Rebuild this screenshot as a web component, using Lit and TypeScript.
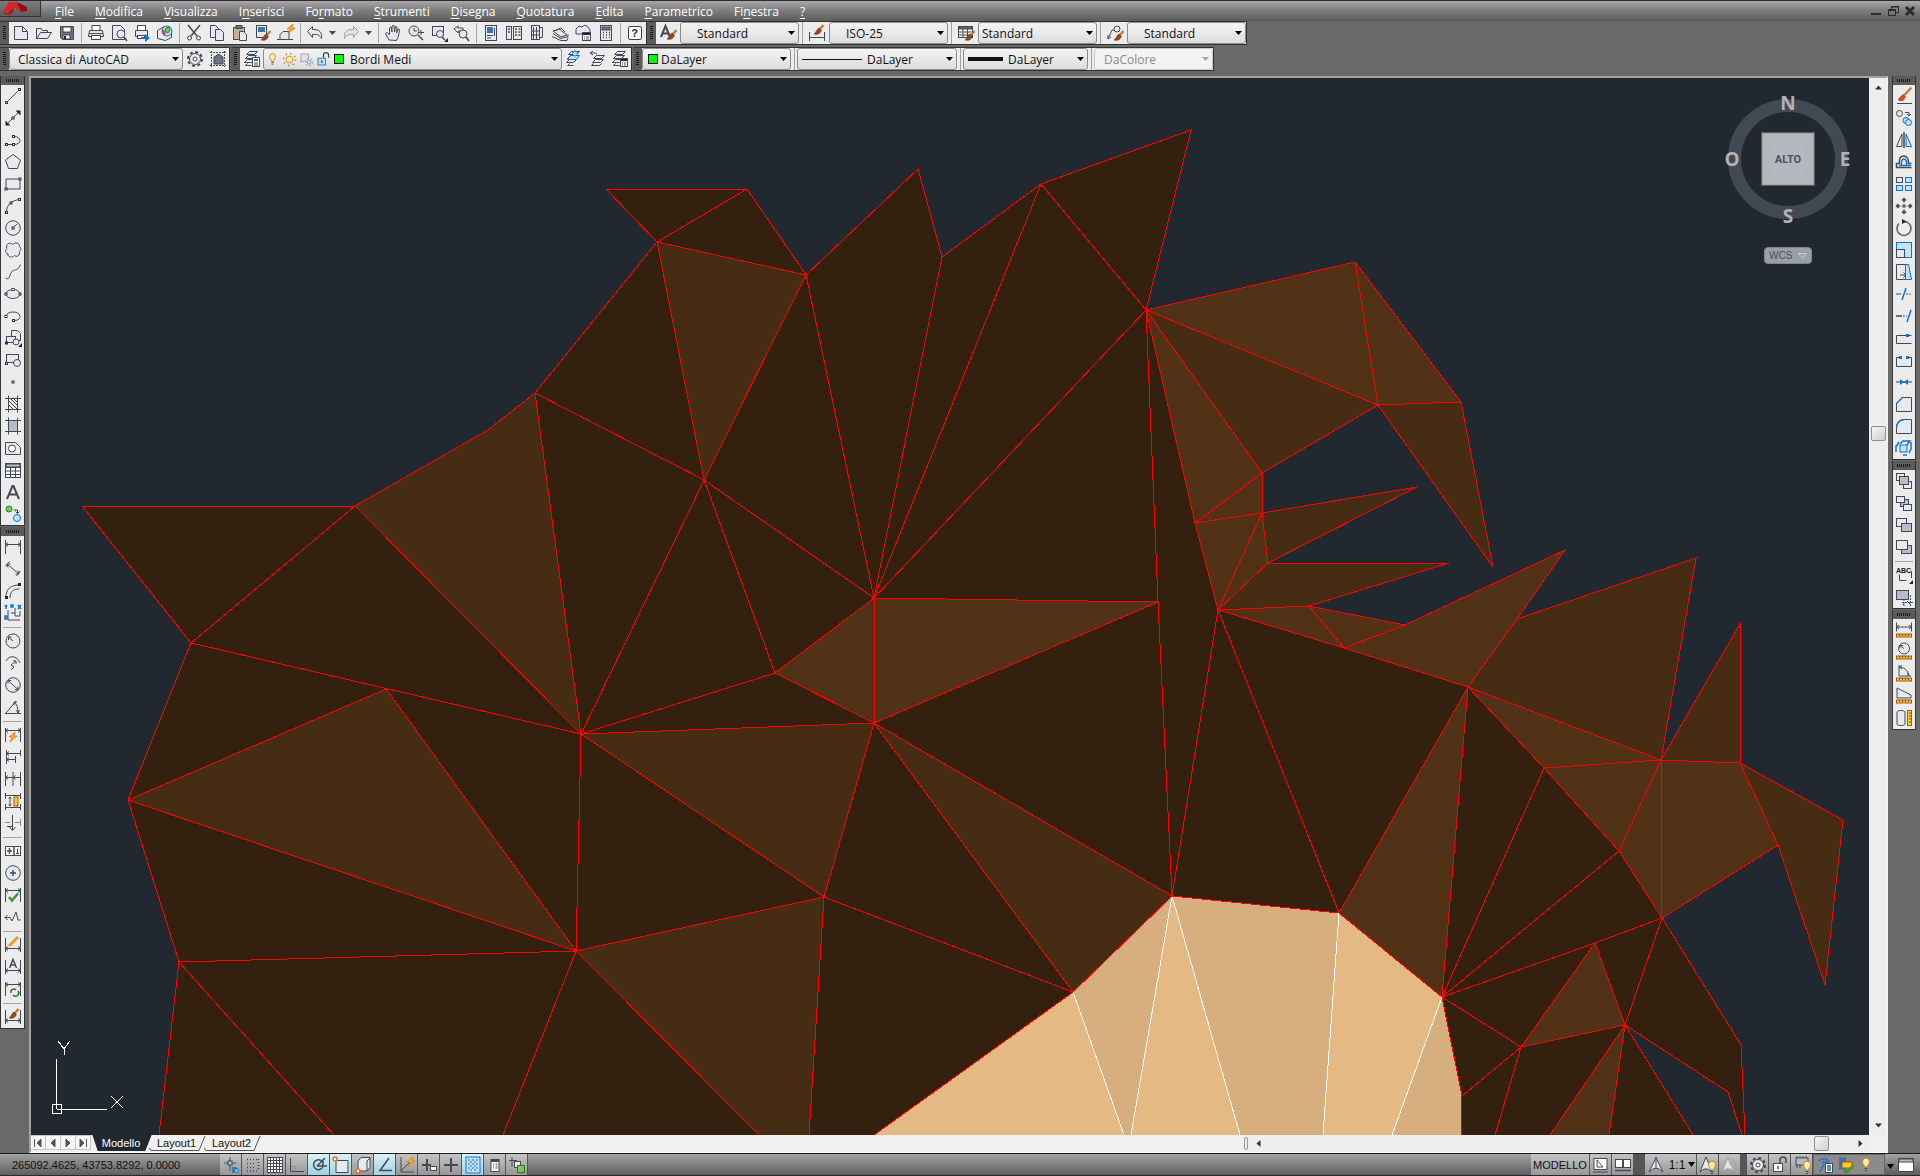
import { LitElement, html, css } from "lit";
import { customElement, property } from "lit/decorators.js";
import { unsafeSVG } from "lit/directives/unsafe-svg.js";

/* ---------- icon drawing helpers (20 x 20 grid) ---------- */
const p = (d: string, c = "k") => `<path class="${c}" d="${d}"/>`;
const r = (x: number, y: number, w: number, h: number, c = "f") =>
  `<rect class="${c}" x="${x}" y="${y}" width="${w}" height="${h}"/>`;
const o = (x: number, y: number, rad: number, c = "f") => `<circle class="${c}" cx="${x}" cy="${y}" r="${rad}"/>`;
const node = (x: number, y: number) => r(x - 1, y - 1, 2, 2, "n");
const ruler = r(2.5, 14, 15, 3, "y") + p("M5.5 14v2M8.5 14v2M11.5 14v2M14.5 14v2", "thin");
const dim = p("M2.5 3v14M17.5 3v14M2.5 13.5h15M5 11.5l-2.5 2 2.5 2M15 11.5l2.5 2-2.5 2");
const dimTop = p("M2.5 3v14M17.5 3v14M2.5 5.5h15M5 3.5l-2.5 2 2.5 2M15 3.5l2.5 2-2.5 2");
const brush = (x: number, y: number) =>
  `<g transform="translate(${x} ${y})">` + p("M9.5 0L5.5 4.5", "wood") + p("M5 3L7.5 5.5C6 9 3 10 0 9C2 8 2 5 5 3Z", "bristle") + "</g>";
const sheets = p("M7.5 2.5h8l-3 3h-8zM6.500 6.5h8l-3 3h-8zM5.5 10.5h7l-3 3h-7z".replace("6.500", "6.5"), "f") + p("M5.5 14.5l-2 2h6", "k");
const bolt = (x: number, y: number) => `<path class="bolt" transform="translate(${x} ${y})" d="M6 0L0 5h3l-2 5 7-6H5z"/>`;
const bulb = (x: number, y: number) =>
  `<g transform="translate(${x} ${y})">` + p("M2.5 9C2.5 7 .5 6 .5 3.5a3.5 3.5 0 0 1 7 0C7.500 6 5.5 7 5.5 9z".replace("7.500", "7.5"), "bulb") + p("M2.5 10.5h3M3 12.5h2") + "</g>";
const corner = p("M19 19v-4l-4 4z", "kf");

const ICONS: Record<string, string> = {
  new: p("M3.5 3.5h8l5 5v8h-13zM11.5 3.5v5h5", "f"),
  open: p("M2.5 15.5v-10h5l1 2h5v2", "f") + p("M2.5 15.5l4-6h11l-4 6z", "f"),
  save: p("M3.5 3.5h13v13h-11l-2-2z", "slate") + r(6, 4, 8, 5, "w") + r(6, 12, 7, 4, "w") + r(7, 13, 2, 3, "kf"),
  print: r(6, 2.5, 8, 5, "w") + p("M3.5 7.5h13l1 6h-15z", "f") + r(5.5, 12.5, 9, 4, "w") + p("M3 10.5h14"),
  preview: p("M3.5 2.5h8l4 4v10h-12z", "f") + o(12, 11, 4) + p("M15 14l3 4", "k2"),
  publish: r(5.5, 2.5, 8, 5, "w") + p("M3.5 7.5h12v6h-12z", "f") + r(5.5, 12.5, 7, 3, "w") + p("M9 14h4v-3l5 4-5 4v-3H9z", "bf"),
  globe: p("M2.5 7.5l7-4 7 3v8l-6 3-8-2z", "f") + o(12, 8, 5, "bl") + p("M11 5l3-1 1 3-2 3-3-2z", "gf") + p("M8 6l3 4-2 3-2-4z", "rf"),
  cut: p("M4 2l9 11M16 2L7 13", "k2") + o(5.5, 15, 2, "k") + o(14.5, 15, 2, "k"),
  copy: p("M3.5 2.5h5l3 3v9h-8z", "f") + p("M8.5 6.5h5l3 3v8h-8z", "f"),
  paste: r(3.5, 4.5, 11, 12, "tan") + r(6, 2.5, 6, 3, "slate") + p("M9.5 8.5h4l3 3v6h-7z", "f"),
  match: r(3.5, 2.5, 10, 12) + r(5, 4, 7, 5, "bf2") + brush(8, 8),
  block: p("M4 16.5v-5l3-3h6v8zM1 16.5h4M13 16.5h4", "f") + bolt(11, 1),
  undo: p("M2.5 8.5l5-5v3c7-.5 10 3 9 9-1.5-3-4-4.5-9-4v3z", "f"),
  redo: p("M17.5 8.5l-5-5v3c-7-.5-10 3-9 9 1.5-3 4-4.5 9-4v3z", "g"),
  pan: p("M6 17L2.5 10.5l1.5-1 2.5 2V5l1.5-1 1 5V3l2-.5.5 6.5 1-5.5 1.5.5-.5 6 1.5-4 1.5.5c-.5 4-1 7-3 11z", "f"),
  zoomrt: o(8, 8, 5) + p("M8 5v3h3") + p("M12 12l5 5", "k2") + p("M15 7v5M12 9.500h6".replace("9.500", "9.5")),
  zoomwin: r(3.5, 3.5, 11, 9) + o(11, 11, 3.5) + p("M13 14l3 3", "k2") + corner,
  zoomprev: p("M2 6l4-3v2h5v3h-5v2z", "f") + o(11, 11, 4) + p("M14 14l3 4", "k2"),
  props: r(4.5, 2.5, 11, 15) + r(6, 4, 6, 6, "bf2") + p("M6 12.5h6M6 15h4M13.5 5v8"),
  center: r(2.5, 3.5, 5, 13) + r(9.5, 3.5, 8, 13) + p("M11 6h2M14.5 6h2M11 9h2M14.5 9h2M11 12h2M14.5 12h2M4 6h2M4 9h2", "k2"),
  palettes: r(4.5, 2.5, 8, 14) + p("M12.5 4.5h3v10h-3M6.5 4v12M9.5 4v12M5 8h7M5 12h7"),
  sheetset: p("M2 13.5l9 4h6l1-3", "f") + p("M3 10.5l8 5 7-2v-2M3 8l8 6 6-2-8-6zM5 8l6-3 4 4", "f"),
  markup: p("M3 6l3-3 3 1 3-2 3 2 2 3v4h-14z", "f") + r(9.5, 9.5, 8, 8, "w") + r(10, 10, 7, 2, "kf") + p("M11 14h1M13 14h3M11 16h1M13 16h3"),
  calc: r(4.5, 2.5, 11, 15) + r(6, 4, 8, 3, "slate") + p("M7 9.5h1M10 9.5h1M13 9.5h1M7 12h1M10 12h1M13 12h1M7 14.5h1M10 14.5h1M13 14.5h1", "k2"),
  textstyle: p("M3 14L7.5 3 12 14M4.5 10.5h6", "k3") + brush(9, 7),
  dimstyle: p("M2.5 9v9M17.5 9v9M2.5 14.5h15") + brush(7, 2),
  tablestyle: r(2.5, 3.5, 14, 11, "w") + r(3, 4, 13, 2, "slate") + p("M2.5 9h14M2.5 12h14M7 6v8M11.5 6v8") + brush(9, 8),
  leader: p("M3 16L7 7h3M3 16v-4M3 16l3-2") + o(12, 6, 3) + brush(9, 8),
  gear: `<circle class="kd" cx="10" cy="10" r="7"/>` + o(10, 10, 5.5) + o(10, 10, 2, "w"),
  wsave: p("M3.5 2v16M16.5 2v16M2 3.5h16M2 16.5h16", "dash") + p("M6 15V8l5-3 4 3v7z", "slate"),
  layerprops: sheets + r(10.5, 8.5, 7, 9, "w") + r(12, 10, 4, 2, "bf") + p("M12 14h4M12 16h4"),
  bulb: bulb(6, 3),
  sun: `<circle class="ray" cx="10" cy="10" r="7"/>` + o(10, 10, 4, "bulb"),
  frozen: r(3.5, 3.5, 9, 9, "g") + `<circle class="gd" cx="13" cy="13" r="4"/>` + o(13, 13, 2, "g"),
  unlock: r(3.5, 8.5, 9, 8, "bl") + p("M10 8V5a3 3 0 0 1 6 0v3M8 11v3", "k2"),
  unlockw: r(3.5, 8.5, 9, 8, "w") + p("M10 8V5a3 3 0 0 1 6 0v3M8 11v3", "k2"),
  layercur: sheets + p("M6.5 6.5h9l-3 4h-9z", "bl") + o(11, 4.5, 2.5, "bl"),
  layerprev: p("M9.5 6.5h8l-3 3h-8zM8.5 10.5h8l-3 3h-8zM6.5 14.5l-2 2h8l2-2", "f") + p("M10 5C8 3.500 6 4 4 4M6 2L3 4l3 2".replace("3.500", "3.5")),
  layerstate: sheets + r(10.5, 9.5, 7, 8, "w") + r(11, 10, 6, 2, "kf") + p("M12 14h1M14 14h2M12 16h1M14 16h2"),

  line: p("M3.5 16.5l13-13") + node(3.5, 16.5) + node(16.5, 3.5),
  xline: p("M4 16L16 4") + p("M2.5 17.5v-5l5 5zM17.5 2.5v5l-5-5z", "kf") + node(10, 10),
  pline: p("M3 14.5h8M11 14.5c8 0 8-8 0-8") + node(3.5, 14.5) + node(10.5, 14.5) + node(10.5, 6.5),
  polygon: p("M10 2.5L17.5 8l-3 8.5h-9L2.5 8z", "f"),
  rect: r(3, 5, 14, 10) + node(3, 15) + node(17, 5),
  arc: p("M3.5 16.5c0-8 5-12 13-13") + node(3.5, 16.5) + node(8, 7) + node(16.5, 3.5),
  circle: o(10, 10, 7.3) + p("M10 10l4-4") + node(10, 10),
  cloud: p("M10 4.5c2-3 7-1.5 6.5 2 2 2 1.5 4 0 5 1 4-3 6-5 4-2 2.5-7 2-6.5-1.5-3-1-3-4-1-5.5C2 4 7 1.5 10 4.5z", "f"),
  spline: p("M2.5 16c4 3 4-3 6-6s6 0 9-7.5"),
  ellipse: `<ellipse class="f" cx="10" cy="10" rx="7" ry="4.5"/>` + node(3, 10) + node(17, 10) + node(10, 5.5),
  earc: p("M3 10.5c0-6 14-6 14 0 0 3-3 4-6 4") + node(3, 10.5) + node(10.5, 14.5),
  insert: p("M8.5 2.5h6l3 3v7h-9z", "f") + r(3.5, 8.5, 9, 6) + o(13, 14, 3) + corner + node(3.5, 15),
  makeblock: r(3.5, 4.5, 12, 8) + o(14, 13, 3.5) + node(3.5, 13.5),
  point: node(10, 10),
  hatch: p("M5.5 1.5v17M14.5 1.5v17M2 4.5h16M2 15.5h16") + p("M6 7l8 8M6 11l4 4M8 5l6 6M11 5l3 3"),
  gradient: r(5.5, 4.5, 9, 11, "slatel") + p("M5.5 1.5v17M14.5 1.5v17M2 4.5h16M2 15.5h16"),
  region: p("M2.5 4.5h10l5 5v7h-15z", "f") + o(9, 10.5, 3.5, "w"),
  table: r(2.5, 3.5, 15, 14, "w") + r(3, 4, 14, 3, "slatel") + p("M2.5 7.5h15M2.5 11h15M2.5 14.5h15M7.5 7v10M12.5 7v10"),
  mtext: p("M4 17L9.500 4h1L16 17M6 12.5h8".replace("9.500", "9.5"), "k3"),
  addsel: o(6, 5, 3, "gf") + o(14, 14, 3.5, "bl") + p("M10.5 6h4v3M12.5 7.5l2 2 2-2"),

  dlinear: p("M2.5 3v14M17.5 3v14M2.5 7.5h15M5 5.5l-2.5 2 2.5 2M15 5.5l2.5 2-2.5 2"),
  daligned: p("M4 5l12 10M2.5 7.5l4-5M13.5 17l4-5M4 5l1 3.5M4 5h3.5M16 15l-1-3.5M16 15h-3.5"),
  darc: p("M3 16c0-8 5-12 13-12M7 17c0-6 3-9 9.5-9") + r(2, 15, 3, 3, "kf") + r(15, 2, 3, 3, "kf"),
  dord: p("M5 7v10h12M8 10h4v3h5v-5M12 5v5") + p("M2 2l1 2 1-2M3 4v2M8 2h2v2h-2zM15 2l3 4M18 2l-3 4M2 13h2v3h-2z", "b"),
  dradius: o(10, 10, 7) + p("M10 10L5.5 6M5.5 6v3M5.5 6h3"),
  djog: p("M3 8c3-6 11-6 14 2M8 17l3-3-3-2 5-4M13 8v3M13 8h-3"),
  ddia: o(10, 10, 7.3) + p("M5 5.5l10 9M5 5.5v3M5 5.5h3M15 14.5v-3M15 14.5h-3"),
  dang: p("M2 16.5h16M3 16L13 4M11 5c3 2 4 6 4 11M11 5v3M11 5h3M15 16l-1.5-3M15 16l1.5-3"),
  dquick: dimTop + bolt(6, 7),
  dbase: p("M3.5 3v14M17.5 3v6M3.5 6.5h14M12.5 9v7M3.5 12.5h9M6 4.5l-2.5 2 2.5 2M6 10.5l-2.5 2 2.5 2"),
  dcont: p("M2.5 3v14M10 3v14M17.5 3v14M2.5 8.5h15M5 6.5l-2.5 2 2.5 2M12.5 6.5L10 8.5l2.5 2"),
  dspace: p("M2.5 2v6M17.5 2v6M2.5 4.5h15M2.5 13v6M17.5 13v6M2.5 16.5h15M7 6v9M5.5 7.5L7 6l1.5 1.5M5.5 13.5L7 15l1.5-1.5") + r(11, 6, 4, 9, "y"),
  dbreak: p("M2 9.5h5M12 9.5h5M17.5 6v7", "gk") + p("M9.5 2v15M6.5 14l3 3.5 3-3.5M4 13.5h5"),
  tol: r(2.5, 5.5, 15, 9, "w") + p("M11 6v9M4 10h5M6.5 7v6", "k2") + p("M14.5 7.5v5M13 12.5h3"),
  cmark: o(10, 10, 7.3) + p("M10 7v6M7 10h6", "k2"),
  dinsp: dimTop + p("M6 12l3 3.5 6-7", "gr"),
  djogl: p("M2 10.5h5l2 3.5 4-9 2 8h3M4.5 8L2 10.5 4.5 13"),
  dedit: dim + p("M6 11L15 2", "pencil"),
  dtedit: dim + p("M6.5 11L10 2.5 13.5 11M8 8h4", "k2"),
  dupdate: dimTop + p("M8 14a3 3 0 0 1 5-3M15 12a3 3 0 0 1-5 4", "gr1"),
  dstyle: dim + brush(6, 2),

  erase: p("M3 17.5h15") + p("M17.5 1.5L9 10.5", "wood") + p("M9 8l3 3-3 4H5l-1-2z", "rf"),
  mcopy: o(5.5, 5.5, 3) + o(12, 12.5, 3, "bl") + o(14.5, 14.5, 3, "bl") + p("M11 4.5h4v3M13 6l2 2 2-2"),
  mirror: p("M8 4v12.5H2.5z", "f") + p("M12 4v12.5h5.5z", "bl") + p("M10 2v16", "k2"),
  offset: p("M17.5 15.5h-15v-4h3c-2-10 10-10 9 0h3", "k2") + p("M5 13.5h12M7.5 13c-1-8 6-8 5 0", "b"),
  array: r(2.5, 3.5, 6, 5) + r(11.5, 3.5, 6, 5, "bl") + r(2.5, 11.5, 6, 5, "bl") + r(11.5, 11.5, 6, 5, "bl"),
  move: p("M10 2.5v4M10 13.5v4M2.5 10h4M13.5 10h4M8 4.5l2-2 2 2M8 15.5l2 2 2-2M4.5 8l-2 2 2 2M15.5 8l2 2-2 2", "k2") + node(10, 10),
  rotate: p("M9 3.5a7 7 0 1 1-4 2", "gk2") + p("M8 1l4.5 2.5L8 6z", "kf"),
  scale: r(2.5, 2.5, 15, 15, "bl") + r(2.5, 9.5, 8, 8, "f"),
  stretch: p("M2.5 2.5h9v15h-9z", "f") + p("M11.5 2.5h3l3 15h-6z", "bl") + p("M6 13h6M9.5 10.500l2.500 2.500-2.500 2.500".replaceAll("500", "5")),
  trim: p("M2 10h5") + p("M12 4L8 16", "b") + p("M12 10h6", "bd"),
  extend: p("M2 10h6", "k2") + p("M17 4l-4 12", "b") + p("M9 10h4", "bd"),
  breakpt: p("M17.5 7.5h-15v8h15", "f") + r(12, 6, 3, 3, "bf"),
  brk: p("M5 7.5H2.5v9h15v-9H15", "f") + r(5, 6, 3, 3, "bf") + r(12, 6, 3, 3, "bf"),
  join: p("M2 10h16") + p("M6 7l4 3-4 3zM14 7l-4 3 4 3z", "bf"),
  chamfer: p("M2.5 17.5v-8l6-6h9v14z", "f") + p("M2.5 9.5l6-6", "b"),
  fillet: p("M2.5 17.5v-6c0-5 4-8 8-8h7v14z", "f") + p("M2.5 11.5c0-5 4-8 8-8", "b"),
  explode: r(6, 7, 7, 7, "bl") + p("M3 7l2-3M2 14V8l2-1M6 6l3-3h7l-3 4M17 4v7l-2 4M9 17h4", "b"),
  front: r(2.5, 2.5, 8, 7) + r(9.5, 10.5, 8, 7) + r(5.5, 5.5, 9, 8, "slatel"),
  back: r(6.5, 6.5, 8, 7, "slatel") + r(2.5, 3.5, 8, 6) + r(9.5, 11.5, 8, 6),
  above: r(2.5, 3.5, 10, 8) + r(7.5, 8.5, 10, 8, "slatel"),
  under: r(7.5, 8.5, 10, 8, "slatel") + r(2.5, 3.5, 11, 9),
  textfront: `<text class="abc" x="2" y="8">ABC</text>` + p("M5.5 9.5v6h7M17.5 6v7") + corner,
  hatchback: r(2.5, 3.5, 12, 9, "slatel") + p("M8 15.5h11M16.5 8v11M10 12v7M9 17l2 2M13 14l3 3", "dash"),
  idist: p("M2.5 2.5v9M17.5 2.5v9M2.5 7h15M5 5L2.5 7 5 9M15 5l2.5 2L15 9") + ruler,
  irad: o(10, 6.5, 5.5) + p("M10 6.5L6 3.5M6 3.5v3M6 3.5h3") + ruler,
  iang: p("M5 1v11h12M5 3c5 0 9 3 10 9M8 1.5L5 3l3 2M15 12l-2-3") + ruler,
  iarea: p("M3 12V2l14 7v3z", "f") + ruler,
  ivol: p("M3 4c0-2 8-2 8 0v12c0 2-8 2-8 0z", "f") + r(13.5, 2.5, 4, 15, "y") + p("M15 5h2M15 8h2M15 11h2M15 14h2", "thin"),

  infer: p("M9 2v14M3 8h12") + r(7, 6, 4, 4, "slatel") + p("M12 12v6M12 13h3v3h-3", "b") + r(14, 14, 3, 3, "bl"),
  snap: p("M4 4.5h12M4 8.5h8M4 12.5h8M4 16h12M15.5 4v12", "dot"),
  grid: r(2.5, 2.5, 15, 15, "w") + p("M5.5 2v16M8.5 2v16M11.5 2v16M14.5 2v16M2 5.5h16M2 8.5h16M2 11.5h16M2 14.5h16"),
  ortho: p("M3.5 3v13.5H17") + p("M4 11.5h4v5", "gk"),
  polar: p("M13 6a5 5 0 1 0 1 6", "k2") + p("M8 11L16 3M8 11h10M14 6v5", "k2"),
  osnap: p("M5 5.5h12v12H5z", "f") + o(4, 4, 2, "or"),
  osnap3: p("M5 6l3-3.5h9v10l-3 3.5H5z", "f") + p("M14 6v10M14 6l3-3") + o(5, 16, 2, "or"),
  otrack: p("M14 3L5 15.5h12", "k2"),
  ducs: p("M4 2v15h13M4 16L13 7") + bolt(10, 2),
  dyn: p("M8 4v12M3 10h9", "k3") + r(11.5, 11.5, 6, 4, "w"),
  lwt: p("M10 3v14M3 10h14", "k3"),
  tpy: r(3, 2, 14, 16, "bl") + p("M5 4h2v2H5zM9 4h2v2H9zM13 4h2v2h-2zM7 6h2v2H7zM11 6h2v2h-2zM5 8h2v2H5zM9 8h2v2H9zM13 8h2v2h-2zM7 10h2v2H7zM11 10h2v2h-2zM5 12h2v2H5zM9 12h2v2H9zM13 12h2v2h-2zM7 14h2v2H7zM11 14h2v2h-2z", "bfs"),
  qp: r(6, 4.5, 8, 12, "w") + p("M6 6h8", "k3") + p("M8 9h1M10.5 9h2M8 11h1M10.5 11h2M8 13h1M10.5 13h2"),
  sc: p("M5 2v10M2 5.5h8") + r(7.5, 6.5, 6, 6) + r(10.5, 10.5, 7, 7, "gf"),

  model: r(3, 3.5, 13, 11, "w") + p("M6 12V5l6 7zM2 17h15"),
  qv: r(2.5, 4.5, 7, 8, "w") + r(10.5, 4.5, 7, 8, "w") + p("M2 15.5h16", "k2"),
  person: p("M10 2l2 5 5 10-4-3-3-1-3 1-4 3 5-10zM10 2v11", "f"),
  personb: p("M8 2l2 5 4 10-4-3H6l-4 3 4-10z", "f") + bulb(10, 6),
  persong: p("M8 3l2 5 5 9-4-3H6l-4 3 4-10zM12 4l3 4 3 3", "g"),
  chip: r(4, 3, 12, 7, "slatel") + p("M5 1v2M8 1v2M11 1v2M14 1v2M5 10v3M8 10v3") + bulb(11, 6),
  antenna: p("M3 6c4-4 8-3 10 1M6 8c2-2 4-2 6 1M4 17l4-8", "b") + r(9.5, 8.5, 7, 9, "w") + p("M11 11h4M11 13h4M11 15h4", "b"),
  plot: r(3, 2.5, 7, 12, "bf2") + r(6, 7, 10, 6, "y") + p("M8 15l2.5 2.5L17 11", "gr"),
  clean: r(2.5, 3.5, 15, 13, "w") + r(3, 4, 14, 3, "slatel"),
};

@customElement("cad-icon")
export class CadIcon extends LitElement {
  @property() name = "";
  static styles = css`
    :host { display: block; width: 20px; height: 20px; }
    svg { display: block; width: 100%; height: 100%; overflow: visible; }
    .k, .k2, .k3, .b, .bd, .gk, .gk2, .dash, .dot, .gr, .gr1, .thin, .kd, .ray, .gd { fill: none; stroke: #434954; stroke-width: 1; }
    .k2 { stroke-width: 1.5; }
    .k3 { stroke-width: 2; }
    .kd { stroke-width: 2; stroke-dasharray: 3 2.5; }
    .ray { stroke: #b98a2c; stroke-width: 2; stroke-dasharray: 1.5 4; }
    .gd { stroke: #a9adb3; stroke-width: 2; stroke-dasharray: 2 2; }
    .dash { stroke-dasharray: 2 1; }
    .dot { stroke-dasharray: 1 2; stroke-width: 1.5; }
    .thin { stroke: #8a4b0c; }
    .f { fill: #e6eaf0; stroke: #434954; }
    .w { fill: #fff; stroke: #434954; }
    .g { fill: #e0e2e4; stroke: #999da3; }
    .gk { stroke: #8d9196; }
    .gk2 { stroke: #61666e; stroke-width: 1.5; }
    .n { fill: #fff; stroke: #2c3038; }
    .kf { fill: #22262c; }
    .slate { fill: #6b7480; stroke: #434954; }
    .slatel { fill: #b4bdc8; stroke: #434954; }
    .b { stroke: #1471cc; stroke-width: 1.5; }
    .bd { stroke: #1471cc; stroke-dasharray: 2 1; }
    .bl { fill: #bfe3f8; stroke: #1471cc; }
    .bf { fill: #1471cc; }
    .bfs { fill: #6fa6d6; }
    .bf2 { fill: #3d72ac; }
    .gf { fill: #7fc35e; stroke: #2e7d25; }
    .gr { stroke: #3c9a22; stroke-width: 2.5; }
    .gr1 { stroke: #2c7a1e; stroke-width: 1.5; }
    .rf { fill: #d1491f; }
    .or { fill: #fff; stroke: #e8702a; stroke-width: 1.5; }
    .y { fill: #ffc928; stroke: #a3590f; }
    .tan { fill: #c7b190; stroke: #5b4a35; }
    .wood { fill: none; stroke: #c77d34; stroke-width: 2.5; }
    .bristle { fill: #96481a; stroke: #5d2b0c; stroke-width: .5; }
    .bolt { fill: #ffae1f; stroke: #d9720b; stroke-width: .7; }
    .bulb { fill: #ffeaa0; stroke: #b98a2c; }
    .pencil { fill: none; stroke: #f09a28; stroke-width: 3; }
    .abc { font: bold 7px "Liberation Sans", sans-serif; fill: #111; }
  `;
  render() {
    return html`<svg viewBox="0 0 20 20" aria-hidden="true">${unsafeSVG(ICONS[this.name] ?? "")}</svg>`;
  }
}

/* ---------- toolbar: a grip followed by tool buttons; "|" makes a divider, "v" a flyout arrow ---------- */
@customElement("cad-toolbar")
export class CadToolbar extends LitElement {
  @property({ type: Array }) items: string[] = [];
  @property({ type: Boolean, reflect: true }) vertical = false;
  static styles = css`
    :host { display: flex; box-sizing: border-box; height: 24px; background: #ececec; border: 1px solid #333; border-width: 1px 1px 1px 0; }
    .grip { flex: none; width: 9px; background: #5b5b5b; display: flex; align-items: center; justify-content: center; }
    .grip::before { content: ""; width: 3px; height: 14px; background: repeating-linear-gradient(#1c1c1c 0 1px, #5b5b5b 1px 2px); }
    button { flex: none; width: 23px; padding: 0; border: 0; background: none; display: flex; align-items: center; justify-content: center; }
    button.fly { width: 13px; }
    .fly svg { width: 7px; height: 4px; fill: #44484f; }
    .help { width: 12px; height: 12px; border: 1px solid #3c424c; border-radius: 2px; background: #fff; font: bold 11px/12px "Liberation Sans", sans-serif; color: #22262c; }
    .sep { flex: none; width: 6px; display: flex; justify-content: center; padding: 1px 0; box-sizing: border-box; }
    .sep::before { content: ""; width: 1px; background: #a2a2a2; }
    :host([vertical]) { flex-direction: column; height: auto; width: 100%; border-width: 0 1px 1px 1px; }
    :host([vertical]) .grip { width: auto; height: 9px; }
    :host([vertical]) .grip::before { width: 14px; height: 3px; background: repeating-linear-gradient(90deg, #1c1c1c 0 1px, #5b5b5b 1px 2px); }
    :host([vertical]) button { width: 100%; height: 22px; }
    :host([vertical]) .sep { width: auto; height: 6px; flex-direction: column; padding: 0 2px; }
    :host([vertical]) .sep::before { width: auto; height: 1px; }
  `;
  private item(i: string) {
    switch (i) {
      case "|":
        return html`<span class="sep"></span>`;
      case "v":
        return html`<button class="fly" aria-label="Elenco"><svg viewBox="0 0 7 4"><path d="M0 0h7L3.5 4z" /></svg></button>`;
      case "?":
        return html`<button><span class="help">?</span></button>`;
      default:
        return html`<button aria-label=${i}><cad-icon name=${i}></cad-icon></button>`;
    }
  }
  render() {
    return html`<span class="grip"></span>${this.items.map((i) => this.item(i))}<slot></slot>`;
  }
}

/* ---------- drop-down with optional leading artwork ---------- */
@customElement("cad-select")
export class CadSelect extends LitElement {
  @property() value = "";
  @property() label = "";
  @property({ type: Boolean, reflect: true }) disabled = false;
  static styles = css`
    :host { display: grid; flex: none; align-items: center; }
    .lead, select, .arrow { grid-area: 1 / 1; }
    .lead { justify-self: start; display: flex; align-items: center; pointer-events: none; z-index: 1; }
    .arrow { justify-self: end; width: 7px; height: 4px; margin-right: 4px; pointer-events: none; }
    select { appearance: none; box-sizing: border-box; width: 100%; height: 22px; margin: 0; padding: 0 0 0 var(--indent, 8px);
      border: 1px solid #8c8c8c; border-radius: 3px; background: linear-gradient(#f4f4f4, #e9e9e9 50%, #dcdcdc);
      font: 12px "Open Sans", "Noto Sans", sans-serif; color: #111; opacity: 1; }
    :host([disabled]) select { color: #8b8b8b; background: #f3f3f3; border-color: #c9c9c9; }
    :host([disabled]) .arrow { fill: #a5a5a5; }
  `;
  render() {
    return html`<select aria-label=${this.label} ?disabled=${this.disabled}><option>${this.value}</option></select>
      <span class="lead"><slot></slot></span>
      <svg class="arrow" viewBox="0 0 7 4"><path d="M0 0h7L3.5 4z" /></svg>`;
  }
}

/* ---------- model-space drawing ---------- */
const OUTLINE: string[] = [
  "606,189 747,189 806,275 918,169 942,257 1041,184 1191,130 1146,310 1195,523 1218,610 1344,648 1468,687 1544,768 1619,851 1662,918 1741,1045 1745,1135 1742,1135 1728,1092 1625,1025 1693,1135 159,1135 179,962 128,800 191,643 82,506 355,506 488,430 535,393 657,242",
];
const MID: string[] = [
  "535,393 488,430 355,506 581,734", "657,242 806,275 704,480", "386,689 128,800 576,951",
  "581,734 874,723 824,897", "576,951 824,897 809,1135 759,1135", "874,723 1172,896 1073,992",
  "1146,310 1378,405 1262,473", "1378,405 1461,402 1493,567", "1262,513 1417,487 1268,563",
  "1268,563 1449,563 1309,606 1218,610", "1517,619 1696,558 1661,760 1468,687",
  "1661,760 1740,624 1740,763", "1740,763 1843,820 1825,985 1778,845",
];
const LIGHT: string[] = [
  "775,673 874,598 874,723", "874,598 1158,602 874,723", "1146,310 1355,262 1378,405", "1355,262 1461,402 1378,405",
  "1146,310 1262,473 1195,523", "1195,523 1262,473 1262,513", "1195,523 1262,513 1218,610", "1262,513 1268,563 1218,610",
  "1218,610 1309,606 1344,648", "1309,606 1405,625 1344,648", "1344,648 1405,625 1565,550 1517,619 1468,687",
  "1468,687 1661,760 1544,768", "1544,768 1661,760 1619,851", "1619,851 1661,760 1662,918",
  "1661,760 1740,763 1778,845 1662,918", "1468,687 1339,913 1442,997", "1595,943 1625,1025 1521,1047", "1625,1025 1609,1135 1550,1135",
];
const EDGES =
  "M657 242L747 189M657 242L704 480M806 275L874 598L942 257M1041 184L874 598L1146 310L1041 184M535 393L704 480L775 673L581 734L704 480L874 598L775 673L874 723" +
  "M535 393L581 734M355 506L191 643L581 734L576 951L179 962L334 1135M503 1135L576 951M1146 310L1158 602L1172 896L1218 610L1339 913" +
  "M824 897L1073 992M1442 997L1544 768M1442 997L1619 851M1442 997L1595 943L1662 918L1625 1025M1442 997L1521 1047L1462 1096M1521 1047L1495 1135";
const SKIN = "874,1135 1073,992 1172,896 1339,913 1442,997 1462,1096 1461,1135";
const SKIN_SHADE: string[] = ["1073,992 1172,896 1131,1135 1124,1135", "1172,896 1339,913 1323,1135 1240,1135", "1442,997 1462,1096 1461,1135 1392,1135"];
const SKIN_EDGES = "M1073 992L1124 1135M1131 1135L1172 896L1240 1135M1339 913L1323 1135M1442 997L1392 1135";

@customElement("cad-drawing")
export class CadDrawing extends LitElement {
  static styles = css`
    :host { display: grid; position: relative; min-width: 0; min-height: 0; background: #212830; overflow: hidden; }
    .model { position: absolute; inset: 0; display: block; width: 100%; height: 100%; }
    .hull { fill: #33200e; }
    .mid { fill: #452c12; }
    .light { fill: #523216; }
    .hull, .mid, .light, .edge { stroke: #f00; stroke-width: 1; shape-rendering: crispEdges; }
    .edge { fill: none; }
    .skin { fill: #e4b984; stroke: #f00; shape-rendering: crispEdges; }
    .shade { fill: #d7af7e; }
    .rib { fill: none; stroke: #fff; shape-rendering: crispEdges; }
    .rim { fill: none; stroke: #f00; shape-rendering: crispEdges; }
    .ucs { position: absolute; left: 18px; bottom: 19px; width: 80px; height: 80px; fill: none; stroke: #fff; shape-rendering: crispEdges; overflow: visible; }
    .cube { position: absolute; top: 7px; right: 17px; width: 128px; display: flex; flex-direction: column; align-items: center; gap: 10px; }
    .compass { display: block; width: 128px; height: 152px; }
    .ring { fill: none; stroke: #434952; stroke-width: 13; }
    .face { fill: #b3b7ba; stroke: #8f9498; }
    .inner { fill: #b4b8c1; }
    .dir { font: bold 19px "Open Sans", sans-serif; fill: #b0b4b8; text-anchor: middle; }
    .top { font: bold 11px Roboto, sans-serif; fill: #4d525c; text-anchor: middle; }
    .wcs { display: flex; align-items: center; justify-content: space-between; box-sizing: border-box; width: 48px; height: 17px; padding: 0 4px; border: 1px solid #7f8591; border-radius: 4px; background: #9a9fab; font: 10px "Liberation Sans", sans-serif; color: #4b515d; }
    .wcs svg { display: block; width: 9px; height: 6px; fill: none; stroke: #c9cdd4; }
  `;
  render() {
    const polys = (list: string[], cls: string) => unsafeSVG(list.map((pts) => `<polygon class="${cls}" points="${pts}"/>`).join(""));
    return html`
      <svg class="model" viewBox="31 78 1838 1057" preserveAspectRatio="xMinYMin slice">
        ${polys(OUTLINE, "hull")}${polys(MID, "mid")}${polys(LIGHT, "light")}
        <path class="edge" d=${EDGES}></path>
        <polygon class="skin" points=${SKIN}></polygon>
        ${polys(SKIN_SHADE, "shade")}
        <path class="rib" d=${SKIN_EDGES}></path>
        <polyline class="rim" points=${SKIN}></polyline>
      </svg>
      <svg class="ucs" viewBox="0 0 80 80">
        <path d="M7.5 73V23M3 68.5h9v9H3zM8 73.5h50M9 5l6 8 6-8M15 12v7M62 60l12 12M74 60L62 72"></path>
      </svg>
      <div class="cube">
        <svg class="compass" viewBox="0 -10 128 152">
          <circle class="ring" cx="64" cy="64" r="53.5"></circle>
          <rect class="face" x="38" y="38" width="52" height="52"></rect>
          <rect class="inner" x="48" y="48" width="32" height="32"></rect>
          <text class="top" x="64" y="68">ALTO</text>
          <text class="dir" x="64" y="15">N</text><text class="dir" x="64" y="128">S</text>
          <text class="dir" x="8" y="71">O</text><text class="dir" x="121" y="71">E</text>
        </svg>
        <button class="wcs">WCS<svg viewBox="0 0 9 6"><path d="M.5 .5h8l-4 5z"></path></svg></button>
      </div>`;
  }
}

const MENU: [string, string, string][] = [
  ["", "F", "ile"], ["", "M", "odifica"], ["", "V", "isualizza"], ["I", "n", "serisci"], ["Fo", "r", "mato"], ["", "S", "trumenti"],
  ["", "D", "isegna"], ["", "Q", "uotatura"], ["", "E", "dita"], ["", "P", "arametrico"], ["Fi", "n", "estra"], ["", "?", ""],
];
const STANDARD = "new open save | print preview publish globe | cut copy paste match block | undo v redo v | pan zoomrt zoomwin zoomprev | props center palettes sheetset markup calc | ?".split(" ");
const DRAW = "line xline pline polygon rect arc circle cloud spline ellipse earc insert makeblock point hatch gradient region table mtext addsel".split(" ");
const DIMS = "dlinear daligned darc dord | dradius djog ddia dang | dquick dbase dcont dspace dbreak | tol cmark dinsp djogl | dedit dtedit dupdate | dstyle".split(" ");
const MODIFY = "erase mcopy mirror offset array move rotate scale stretch trim extend breakpt brk join chamfer fillet explode".split(" ");
const ORDER = "front back above under | textfront hatchback".split(" ");
const INQUIRY = "idist irad iang iarea ivol".split(" ");
const TOGGLES = "infer snap grid ortho polar osnap osnap3 otrack ducs dyn lwt tpy qp sc".split(" ");
const ACTIVE = new Set(["polar", "osnap", "otrack", "tpy"]);

@customElement("app-root")
export class AppRoot extends LitElement {
  static styles = css`
    :host { display: flex; flex-direction: column; height: 100vh; background: #696969; font: 12px "Open Sans", "Noto Sans", sans-serif; color: #111; overflow: hidden; }
    button { font: inherit; color: inherit; padding: 0; border: 0; background: none; }
    .menubar { flex: none; display: flex; height: 21px; box-sizing: border-box; border-top: 1px solid #2c2a2e; background: linear-gradient(#a9a7a9, #7b7b7b 50%, #5c5c5c); }
    .logo { width: 41px; height: 16px; border: 1px solid #333; border-top: 0; border-left: 0; background: linear-gradient(#7d7d7d, #5d5d5d); margin-right: 14px; box-sizing: border-box; }
    .logo svg { display: block; }
    .menus { display: flex; gap: 21px; color: #fff; }
    .menus u { text-underline-offset: 2px; }
    .win { margin-left: auto; display: flex; align-items: center; gap: 5px; padding-right: 4px; }
    .win svg { display: block; width: 12px; height: 12px; fill: none; stroke: #2b2b2b; }
    .bars { flex: none; display: flex; }
    .top { margin-bottom: 2px; }
    .second { margin-bottom: 5px; gap: 1px; }
    .tool { flex: none; width: 24px; display: flex; align-items: center; justify-content: center; }
    .narrow { width: 23px; }
    .sep { flex: none; width: 6px; display: flex; justify-content: center; }
    .sep::before { content: ""; width: 1px; background: #a2a2a2; }
    .w119 { width: 119px; } .w174 { width: 174px; } .w299 { width: 299px; } .w149 { width: 149px; } .w160 { width: 160px; } .w125 { width: 125px; }
    .i4 { --indent: 3px; } .i16 { --indent: 16px; } .i86 { --indent: 86px; } .i20 { --indent: 18px; } .i71 { --indent: 69px; } .i46 { --indent: 44px; } .i10 { --indent: 9px; }
    .swatch { width: 8px; height: 8px; border: 1px solid #111; background: #0f0; margin-left: 6px; }
    .states { display: flex; align-items: center; padding-left: 1px; }
    .states cad-icon { width: 17px; height: 17px; }
    .states .swatch { margin-left: 2px; }
    .stroke { width: 60px; height: 1px; background: #111; margin-left: 5px; }
    .thick { width: 35px; height: 4px; }
    .body { flex: 1; min-height: 0; display: flex; }
    .dock { flex: none; display: flex; flex-direction: column; gap: 1px; width: 25px; }
    .rdock { margin-left: 4px; width: 24px; margin-right: 4px; }
    .frame { flex: 1; min-width: 0; display: grid; grid-template: minmax(0, 1fr) 17px / minmax(0, 1fr) 18px; margin-left: 4px; border: 1px solid #b5b5b0; border-width: 2px 1px 1px 2px; border-color: #a3a3a0 #f4f4f4 #fff #a3a3a0; box-sizing: border-box; background: #f0f0f0; }
    .vscroll, .hscroll { display: flex; align-items: center; background: #eeeeee; }
    .vscroll { flex-direction: column; padding: 6px 0; }
    .vscroll .room1 { flex: 336; } .vscroll .room2 { flex: 682; }
    .thumb { box-sizing: border-box; border: 1px solid #8f8f8f; border-radius: 2px; background: linear-gradient(135deg, #f6f6f6, #cfcfcf); width: 15px; height: 15px; }
    .arr { width: 7px; height: 7px; fill: #333; display: block; }
    .bottom { display: flex; background: #f0f0f0; min-width: 0; }
    .nav { display: flex; }
    .nav button { width: 15px; height: 15px; border: 1px solid #c6c6c6; border-left-width: 0; display: flex; align-items: center; justify-content: center; box-sizing: border-box; background: #f7f7f7; }
    .nav svg { width: 8px; height: 8px; fill: #555; stroke: #555; }
    .tabs { display: flex; font: 11px "Liberation Sans", sans-serif; margin-left: 2px; }
    .tab { display: grid; width: 55px; height: 16px; align-items: center; justify-items: center; }
    .tab > * { grid-area: 1 / 1; }
    .tab svg { width: 100%; height: 16px; overflow: visible; fill: none; stroke: #555; }
    .tab .on { fill: #212830; stroke: #212830; }
    .tab.active { color: #fff; width: 56px; }
    .hscroll { flex: 0 0 34%; margin-left: auto; }
    .splitter { width: 4px; height: 13px; border: 1px solid #999; border-radius: 2px; box-sizing: border-box; margin-right: 7px; }
    .hscroll .room1 { flex: 1; } .hscroll .room2 { flex: 0 0 28px; }
    .hscroll .arr:last-child { margin-right: 5px; }
    .status { flex: none; display: flex; height: 23px; box-sizing: border-box; border-top: 1px solid #1b1b1b; border-bottom: 1px solid #2c2a2e; background: linear-gradient(#a2a2a2, #808080 50%, #5e5e5e); }
    .coords { width: 208px; padding-left: 12px; font: 11px/22px "Liberation Sans", sans-serif; }
    .toggle { width: 22px; display: flex; align-items: center; justify-content: center; box-sizing: border-box; border-right: 1px solid #555; background: linear-gradient(#c4c4c4, #979797); }
    .toggle.on { background: linear-gradient(#d9f1f7, #9fd3e2); }
    .toggle cad-icon { width: 20px; height: 20px; }
    .right { margin-left: auto; display: flex; padding-right: 3px; }
    .right .model { width: 59px; font: 11px "Liberation Sans", sans-serif; }
    .gap { width: 11px; background: #565656; }
    .small { width: 6px; }
    .scale { width: 52px; gap: 3px; font: 12px "Liberation Sans", sans-serif; }
    .scale svg, .more svg { width: 7px; height: 5px; }
    .tray { display: flex; width: 72px; align-items: center; gap: 0; padding-left: 2px; box-sizing: border-box; background: #8b8b8b; border: 1px solid #666; }
    .more { width: 10px; }
    .clear { background: none; border: 0; }
  `;

  private tool(name: string, cls = "") {
    return html`<button class="tool ${cls}" aria-label=${name}><cad-icon name=${name}></cad-icon></button>`;
  }

  private tab(name: string, active = false) {
    return html`<button class="tab ${active ? "active" : ""}">
      <svg viewBox="0 0 55 16" preserveAspectRatio="none"><path class=${active ? "on" : ""} d=${active ? "M0 0L5 15.5H51L57 0Z" : "M0 13L2 15.5H50L56 1"}></path></svg>
      <span>${name}</span>
    </button>`;
  }

  render() {
    return html`
      <header class="menubar">
        <button class="logo" aria-label="Menu applicazione">
          <svg width="38" height="14"><path d="M9 0h8l4 9-4-1-1-2h-3l-5 6-5-2z" fill="#d8232b"></path><path d="M17 0l10 5v4l-6 1z" fill="#8e0f15"></path><path d="M3 10l5 2 5-6 1 3-5 4-5-1z" fill="#a5151b"></path></svg>
        </button>
        <nav class="menus">${MENU.map(([a, b, c]) => html`<button>${a}<u>${b}</u>${c}</button>`)}</nav>
        <div class="win">
          <button aria-label="Riduci a icona"><svg viewBox="0 0 12 12"><path d="M1 9h10" stroke-width="2"></path></svg></button>
          <button aria-label="Ripristina"><svg viewBox="0 0 12 12"><path d="M4.5 4V1.5h7v6H9M1.5 4.5h7v6h-7zM1 5.5h8M4 2h8"></path></svg></button>
          <button aria-label="Chiudi"><svg viewBox="0 0 12 12"><path d="M2 2l8 8M10 2l-8 8" stroke-width="3"></path></svg></button>
        </div>
      </header>
      <div class="bars top">
        <cad-toolbar .items=${STANDARD}></cad-toolbar>
        <cad-toolbar>
          ${this.tool("textstyle")}<cad-select class="w119 i16" label="Stile di testo" value="Standard"></cad-select><span class="sep"></span>
          ${this.tool("dimstyle")}<cad-select class="w119 i16" label="Stile di quota" value="ISO-25"></cad-select><span class="sep"></span>
          ${this.tool("tablestyle")}<cad-select class="w119 i4" label="Stile di tabella" value="Standard"></cad-select><span class="sep"></span>
          ${this.tool("leader")}<cad-select class="w119 i16" label="Stile direttrice" value="Standard"></cad-select>
        </cad-toolbar>
      </div>
      <div class="bars second">
        <cad-toolbar><cad-select class="w174" label="Area di lavoro" value="Classica di AutoCAD"></cad-select>${this.tool("gear", "narrow")}${this.tool("wsave", "narrow")}</cad-toolbar>
        <cad-toolbar>
          ${this.tool("layerprops", "narrow")}
          <cad-select class="w299 i86" label="Layer" value="Bordi Medi"><span class="states"><cad-icon name="bulb"></cad-icon><cad-icon name="sun"></cad-icon><cad-icon name="frozen"></cad-icon><cad-icon name="unlock"></cad-icon><span class="swatch"></span></span></cad-select>
          ${this.tool("layercur", "narrow")}${this.tool("layerprev", "narrow")}${this.tool("layerstate", "narrow")}
        </cad-toolbar>
        <cad-toolbar>
          <cad-select class="w149 i20" label="Colore" value="DaLayer"><span class="swatch"></span></cad-select><span class="sep"></span>
          <cad-select class="w160 i71" label="Tipo di linea" value="DaLayer"><span class="stroke"></span></cad-select><span class="sep"></span>
          <cad-select class="w125 i46" label="Spessore" value="DaLayer"><span class="stroke thick"></span></cad-select><span class="sep"></span>
          <cad-select class="w119 i10" label="Stile di stampa" value="DaColore" disabled></cad-select>
        </cad-toolbar>
      </div>
      <div class="body">
        <aside class="dock"><cad-toolbar vertical .items=${DRAW}></cad-toolbar><cad-toolbar vertical .items=${DIMS}></cad-toolbar></aside>
        <main class="frame">
          <cad-drawing></cad-drawing>
          <div class="vscroll">
            <svg class="arr" viewBox="0 0 7 7"><path d="M0 5.5h7L3.5 1.5z"></path></svg><span class="room1"></span><span class="thumb"></span><span class="room2"></span>
            <svg class="arr" viewBox="0 0 7 7"><path d="M0 1.5h7L3.5 5.5z"></path></svg>
          </div>
          <div class="bottom">
            <div class="nav">
              <button aria-label="Primo"><svg viewBox="0 0 8 8"><path d="M7 0v8L3 4zM.5 0v8"></path></svg></button>
              <button aria-label="Precedente"><svg viewBox="0 0 8 8"><path d="M6 0v8L2 4z"></path></svg></button>
              <button aria-label="Successivo"><svg viewBox="0 0 8 8"><path d="M2 0v8l4-4z"></path></svg></button>
              <button aria-label="Ultimo"><svg viewBox="0 0 8 8"><path d="M1 0v8l4-4zM7.5 0v8"></path></svg></button>
            </div>
            <div class="tabs">${this.tab("Modello", true)}${this.tab("Layout1")}${this.tab("Layout2")}</div>
            <div class="hscroll">
              <span class="splitter"></span><svg class="arr" viewBox="0 0 7 7"><path d="M5.5 0v7L1.5 3.5z"></path></svg><span class="room1"></span><span class="thumb"></span><span class="room2"></span>
              <svg class="arr" viewBox="0 0 7 7"><path d="M1.5 0v7l4-3.5z"></path></svg>
            </div>
          </div>
        </main>
        <aside class="dock rdock"><cad-toolbar vertical .items=${MODIFY}></cad-toolbar><cad-toolbar vertical .items=${ORDER}></cad-toolbar><cad-toolbar vertical .items=${INQUIRY}></cad-toolbar></aside>
      </div>
      <footer class="status">
        <span class="coords">265092.4625, 43753.8292, 0.0000</span>
        ${TOGGLES.map((t) => html`<button class="toggle ${ACTIVE.has(t) ? "on" : ""}" aria-label=${t} aria-pressed=${ACTIVE.has(t)}><cad-icon name=${t}></cad-icon></button>`)}
        <div class="right">
          <button class="toggle model">MODELLO</button>
          <button class="toggle" aria-label="Modello"><cad-icon name="model"></cad-icon></button>
          <button class="toggle" aria-label="Vista rapida"><cad-icon name="qv"></cad-icon></button>
          <span class="gap"></span>
          <button class="toggle scale"><cad-icon name="person"></cad-icon>1:1<svg viewBox="0 0 7 5"><path d="M0 0h7L3.5 5z"></path></svg></button>
          <button class="toggle" aria-label="Visibilità annotazioni"><cad-icon name="personb"></cad-icon></button>
          <button class="toggle" aria-label="Scale automatiche"><cad-icon name="persong"></cad-icon></button>
          <span class="gap small"></span>
          <button class="toggle" aria-label="Area di lavoro"><cad-icon name="gear"></cad-icon></button>
          <button class="toggle" aria-label="Blocca"><cad-icon name="unlockw"></cad-icon></button>
          <button class="toggle" aria-label="Accelerazione hardware"><cad-icon name="chip"></cad-icon></button>
          <div class="tray"><cad-icon name="antenna"></cad-icon><cad-icon name="plot"></cad-icon><cad-icon name="bulb"></cad-icon></div>
          <button class="more" aria-label="Altro"><svg viewBox="0 0 7 5"><path d="M0 0h7L3.5 5z"></path></svg></button>
          <button class="toggle clear" aria-label="Schermo intero"><cad-icon name="clean"></cad-icon></button>
        </div>
      </footer>`;
  }
}
